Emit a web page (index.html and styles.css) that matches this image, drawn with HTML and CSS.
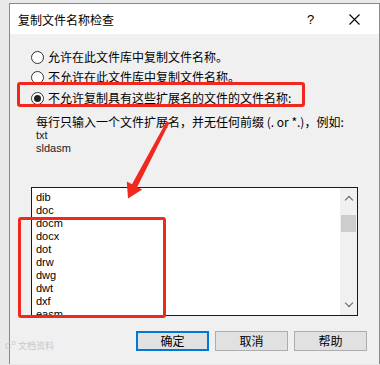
FILE: index.html
```html
<!DOCTYPE html>
<html lang="zh-CN">
<head>
    <meta charset="UTF-8">
    <title>复制文件名称检查</title>
    <link rel="stylesheet" href="styles.css">
</head>
<body>
    <div class="dialog">
        <div class="titlebar">
            <span class="title">复制文件名称检查</span>
            <span class="help">?</span>
            <span class="close">
                <svg width="11" height="11" viewBox="0 0 11 11"><path d="M0.5 0.5 L10.5 10.5 M10.5 0.5 L0.5 10.5" stroke="#000" stroke-width="1.1" fill="none"/></svg>
            </span>
        </div>

        <div class="content">
            <!-- radio options -->
            <div class="options">
                <label class="option"><span class="radio"></span>允许在此文件库中复制文件名称。</label>
                <label class="option"><span class="radio"></span>不允许在此文件库中复制文件名称。</label>
                <label class="option third"><span class="radio checked"></span>不允许复制具有这些扩展名的文件的文件名称:</label>
            </div>

            <div class="hint">
                <p class="hint-main">每行只输入一个文件扩展名，并无任何前缀 (. or *.)，例如:</p>
                <p class="hint-sample">txt</p>
                <p class="hint-sample">sldasm</p>
            </div>

            <!-- extension list -->
            <div class="listbox">
                <div class="items">
                    <div>dib</div>
                    <div>doc</div>
                    <div>docm</div>
                    <div>docx</div>
                    <div>dot</div>
                    <div>drw</div>
                    <div>dwg</div>
                    <div>dwt</div>
                    <div>dxf</div>
                    <div>easm</div>
                </div>
                <div class="scrollbar">
                    <span class="arrow up"></span>
                    <span class="thumb"></span>
                    <span class="arrow down"></span>
                </div>
            </div>

            <div class="buttons">
                <button class="btn default">确定</button>
                <button class="btn">取消</button>
                <button class="btn">帮助</button>
            </div>
        </div>
    </div>

    <!-- red annotations on top of the screenshot -->
    <div class="mark mark-option"></div>
    <div class="mark mark-list"></div>
    <svg class="pointer" width="380" height="365" viewBox="0 0 380 365">
        <polygon points="166.6,121.2 169.4,122.8 137.2,186.9 142.2,189.6 128,198.5 126.8,181.6 132,184.3" fill="#f0281e"/>
    </svg>
    <div class="watermark">C<sup>D</sup> 文档资料</div>
</body>
</html>
```

FILE: styles.css
```css
body {
    margin: 0;
    background-color: #e9e9e9;
    font-family: "Noto Sans CJK SC", "Liberation Sans", sans-serif;
    font-size: 12px;
    color: #000;
    overflow: hidden;
}
.dialog {
    margin: 3px 0 0 9px;
    width: 369px;
    height: 360px;
    background-color: #f0f0f0;
    border: 1px solid #8a8a8a;
    border-bottom: none;
}
.titlebar {
    height: 30px;
    background-color: #fff;
    display: flex;
    align-items: center;
    padding-left: 8px;
}
.title {
    flex: 1;
    font-size: 12px;
}
.help {
    width: 42px;
    font-size: 13px;
    font-family: "Liberation Sans", sans-serif;
}
.close {
    width: 30px;
    display: flex;
    align-items: center;
}
.content {
    padding: 13px 12px 0 21px;
}
.option {
    display: flex;
    align-items: center;
    height: 20px;
    line-height: 20px;
    white-space: nowrap;
}
.option.third {
    margin-top: 1px;
}
.radio {
    width: 11px;
    height: 11px;
    border: 1px solid #333;
    border-radius: 50%;
    background-color: #fff;
    margin-right: 4px;
    display: flex;
    align-items: center;
    justify-content: center;
}
.radio.checked::after {
    content: "";
    width: 7px;
    height: 7px;
    border-radius: 50%;
    background-color: #222;
}
.hint {
    margin-top: 7px;
    padding-left: 5px;
}
.hint p {
    margin: 0;
}
.hint-main {
    line-height: 14px;
    white-space: nowrap;
}
.hint-sample {
    font-family: "Liberation Sans", sans-serif;
    font-size: 11px;
    line-height: 12.5px;
    color: #222;
}
.listbox {
    margin-top: 33px;
    width: 325px;
    height: 127px;
    border: 1px solid #1a1a1a;
    background-color: #fff;
    display: flex;
}
.items {
    flex: 1;
    overflow: hidden;
    padding: 3px 0 0 4px;
    font-family: "Liberation Sans", sans-serif;
    font-size: 11px;
    line-height: 13px;
}
.scrollbar {
    width: 17px;
    background-color: #f0f0f0;
    display: flex;
    flex-direction: column;
    align-items: center;
}
.arrow {
    width: 5px;
    height: 5px;
    border-left: 1.5px solid #606060;
    border-top: 1.5px solid #606060;
}
.arrow.up {
    transform: rotate(45deg);
    margin-top: 9px;
}
.arrow.down {
    transform: rotate(225deg);
    margin-top: auto;
    margin-bottom: 9px;
}
.thumb {
    width: 15px;
    height: 17px;
    margin-top: 12px;
    background-color: #cdcdcd;
}
.buttons {
    margin-top: 15px;
    display: flex;
    justify-content: flex-end;
    gap: 6px;
}
.btn {
    width: 73px;
    height: 20px;
    padding: 0;
    background-color: #e1e1e1;
    border: 1px solid #adadad;
    font-family: "Noto Sans CJK SC", sans-serif;
    font-size: 12px;
    line-height: 16px;
}
.btn.default {
    border: 2px solid #0078d7;
}
.mark {
    position: absolute;
    border: 3px solid #f0281e;
    border-radius: 3px;
}
.mark-option {
    left: 17px;
    top: 82px;
    width: 282px;
    height: 19px;
}
.mark-list {
    left: 18px;
    top: 217px;
    width: 142px;
    height: 95px;
}
.pointer {
    position: absolute;
    left: 0;
    top: 0;
}
.watermark {
    position: absolute;
    left: 5px;
    top: 339px;
    font-size: 9px;
    color: #c8c8c8;
    font-family: "Liberation Sans", sans-serif;
}
.watermark sup {
    font-size: 6px;
}
```
